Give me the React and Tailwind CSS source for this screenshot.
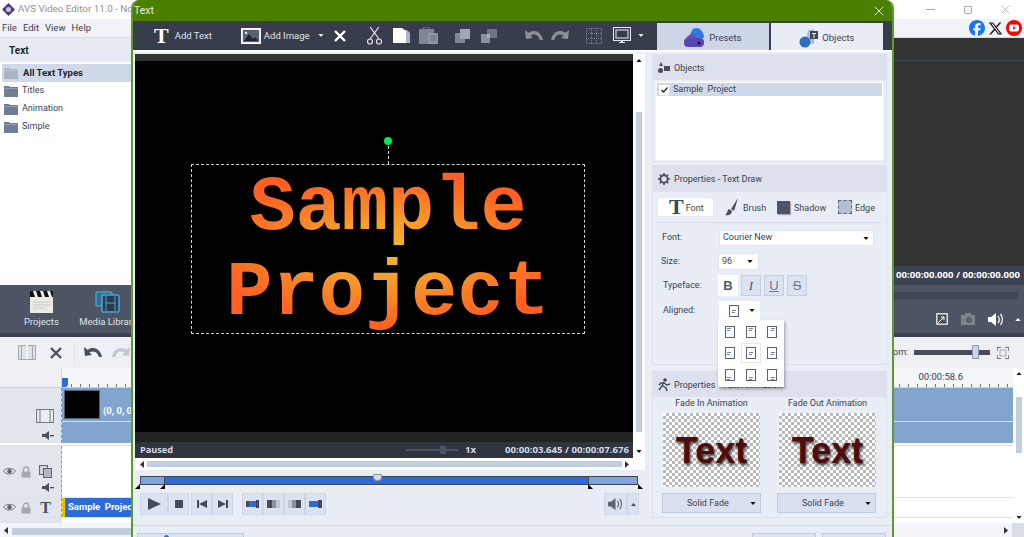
import React from 'react';
import { FaFacebook, FaXTwitter } from 'react-icons/fa6';

const Caret = ({ c = '#111', up, w = 7, h = 4, className = '' }) => (
  <svg width={w} height={h} viewBox="0 0 7 4" className={`shrink-0 ${className}`}><path d={up ? 'M0 4L3.5 0L7 4Z' : 'M0 0H7L3.5 4Z'} fill={c} /></svg>
);
const Side = ({ c = '#333', left }) => (
  <svg width="4" height="7" viewBox="0 0 4 7" className="shrink-0"><path d={left ? 'M4 0V7L0 3.5Z' : 'M0 0V7L4 3.5Z'} fill={c} /></svg>
);
const Folder = ({ c = '#717c96' }) => (
  <svg width="14" height="12" viewBox="0 0 14 12" className="shrink-0"><path d="M0 1h5l1 1h8v10H0z" fill={c} /><path d="M0 3h14v1H0z" fill="#fff" opacity=".25" /></svg>
);
const XMark = ({ s = 11, c = '#fff', w = 2.4 }) => (
  <svg width={s} height={s} viewBox="0 0 12 12" className="shrink-0"><path d="M1 1l10 10M11 1L1 11" stroke={c} strokeWidth={w} /></svg>
);
const Undo = ({ c = '#8b909b', flip, w = 18 }) => (
  <svg width={w} height={w * 0.67} viewBox="0 0 18 12" className={flip ? '-scale-x-100 shrink-0' : 'shrink-0'}><path d="M0 1l1 9 7-1-2.5-2.5C9 4.5 13 5 15 11h3C16 2 9 0 3.5 3.8z" fill={c} /></svg>
);
const Mute = ({ c = '#4a4f5b' }) => (
  <svg width="12" height="9" viewBox="0 0 12 9" className="shrink-0"><path d="M0 3h3l4-3v9L3 6H0z" fill={c} /><path d="M8 4h4v1.4H8z" fill={c} /></svg>
);
const Eye = () => (
  <svg width="13" height="9" viewBox="0 0 13 9" className="shrink-0"><path d="M.5 4C3 .5 10 .5 12.500 4 10 8 3 8 .5 4z" fill="#e6e8ee" stroke="#6e737f" /><circle cx="6.500" cy="4.200" r="2.300" fill="#5f646f" /></svg>
);
const Lock = () => (
  <svg width="10" height="12" viewBox="0 0 10 12" className="shrink-0"><path d="M2.500 6V3.500a2.500 2.500 0 015 0V6" fill="none" stroke="#a3a7b0" strokeWidth="1.400" /><rect x=".5" y="5.500" width="9" height="6" fill="#a3a7b0" /></svg>
);
const Speaker = ({ c = '#fff', s = 16 }) => (
  <svg width={s} height={s * 0.81} viewBox="0 0 16 13" className="shrink-0"><path d="M0 4h3l5-4v13L3 9H0z" fill={c} /><path d="M10 3c1.500 2 1.500 5 0 7M12.500 1c2.500 3 2.500 8 0 11" fill="none" stroke={c} strokeWidth="1.200" /></svg>
);
const Gear = () => (
  <svg width="12" height="12" viewBox="0 0 12 12" className="shrink-0"><circle cx="6" cy="6" r="3.700" fill="none" stroke="#4a4f5b" strokeWidth="2" /><path d="M6 0v2M6 10v2M0 6h2M10 6h2M1.800 1.800l1.400 1.400M8.800 8.800l1.400 1.400M10.200 1.800L8.800 3.200M3.200 8.800l-1.400 1.400" stroke="#4a4f5b" strokeWidth="1.600" /></svg>
);

const Align = ({ h, v }) => {
  const x = h === 0 ? 2 : h === 1 ? 3 : 4;
  const y = v === 0 ? 2 : v === 1 ? 5 : 8;
  return (
    <svg width="10" height="12" viewBox="0 0 10 12" className="shrink-0">
      <rect x=".5" y=".5" width="9" height="11" fill="#fff" stroke="#5b6373" />
      <path d={`M${x} ${y}h4v1h-4zM${x} ${y + 2}h3v1h-3z`} fill="#7b8494" />
    </svg>
  );
};

const TransportBtn = ({ children, w = 'w-[21px]' }) => (
  <div className={`${w} h-full flex items-center justify-center bg-[#dce3f0] border border-[#cfd7e6]`}>{children}</div>
);

const Checker = () => (
  <div className="w-[97px] h-[74px] flex items-center justify-center pt-px bg-[repeating-conic-gradient(#b9b9b9_0_25%,#ffffff_0_50%)] bg-[length:6px_6px]">
    <span className="font-['Liberation_Sans',sans-serif] font-bold text-[36px] leading-none text-[#4e0c0c] [text-shadow:1px_2px_3px_rgba(20,20,20,0.85)]">Text</span>
  </div>
);

const FadeBtn = () => (
  <div className="w-[99px] h-[20px] flex items-center bg-[#d9e0ef] border border-[#bfcbe0] pl-[24px] pr-[4px] justify-between">
    <span className="pt-px">Solid Fade</span><Caret w={6} h={3} />
  </div>
);

const GroupHead = ({ icon, children, h = 'h-[25px]' }) => (
  <div className={`${h} bg-[#dce1ed] flex items-center gap-[4px] pl-[5px] shrink-0`}>{icon}<span className="pt-[2px]">{children}</span></div>
);

function Background() {
  return (
    <div className="flex flex-col w-full h-full">
      <div className="h-[19px] bg-white flex items-center justify-between shrink-0">
        <div className="w-[131px] overflow-hidden whitespace-nowrap flex items-center pl-[2px] gap-[3px] text-[#8f9298] text-[9.800px]">
          <svg width="13" height="13" viewBox="0 0 13 13" className="shrink-0"><path d="M6.500 0L13 6.500 6.500 13 0 6.500z" fill="#4d3c76" /><circle cx="6.500" cy="6.500" r="2.500" fill="#c9c3dc" /></svg>
          <span>AVS Video Editor 11.0 - No</span>
        </div>
        <div className="flex items-center gap-[29px] pr-[14px]">
          <div className="w-[9px] h-px bg-[#aaa]" />
          <div className="w-[8px] h-[8px] border border-[#aaa] rounded-[1px]" />
          <XMark s={9} c="#aaa" w={1} />
        </div>
      </div>
      <div className="h-[19px] bg-[#f1f3f8] flex items-center justify-between shrink-0 border-b border-[#d8dce4]">
        <div className="flex gap-[6px] pl-[2px] text-[9.500px] text-[#3a3f4c]">
          <span>File</span><span>Edit</span><span>View</span><span>Help</span>
        </div>
        <div className="flex items-center gap-[3px] pr-[2px]">
          <FaFacebook size={16} color="#1877f2" />
          <FaXTwitter size={15} color="#222" />
          <svg width="16" height="16" viewBox="0 0 16 16"><circle cx="8" cy="8" r="8" fill="#f00" /><rect x="3" y="4.500" width="10" height="7" rx="2" fill="#fff" /><path d="M7 6.300v3.400L10 8z" fill="#f00" /></svg>
        </div>
      </div>
      <div className="h-[247px] flex justify-between shrink-0">
        <div className="w-[131px] bg-white flex flex-col">
          <div className="h-[25px] bg-[#e6eaf3] flex items-center pl-[9px] font-bold text-[10px] text-[#23262e] border-b border-white">Text</div>
          <div className="flex flex-col pt-[1px] text-[#3a3f4c]">
            <div className="h-[18px] ml-[2px] bg-[#d0d9ea] flex items-center gap-[5px] pl-[2px] font-bold text-[9.500px] text-[#23262e]"><Folder c="#aab4c9" />All Text Types</div>
            {['Titles', 'Animation', 'Simple'].map((t) => (
              <div key={t} className="h-[18px] ml-[4px] flex items-center gap-[4px]"><Folder />{t}</div>
            ))}
          </div>
        </div>
        <div className="w-[131px] bg-[#333333] flex flex-col justify-between">
          <div className="mt-[22px] h-px bg-[#3f464c]" />
          <div className="h-[19px] bg-[#3b4250] flex items-center justify-end pr-[4px] text-white font-bold text-[9.600px] font-['Noto_Sans',sans-serif] whitespace-nowrap">00:00:00.000 / 00:00:00.000</div>
        </div>
      </div>
      <div className="h-[52px] shrink-0 flex justify-between bg-[#4d5564] border-b-4 border-[#3a404c]">
        <div className="w-[131px] flex gap-[24px] pl-[24px] pt-[6px] text-[#dfe3ea] text-[9.500px] overflow-hidden">
          <div className="flex flex-col items-center gap-[2px]">
            <svg width="23" height="22" viewBox="0 0 23 22"><rect y="6" width="23" height="16" fill="#e9e9e6" /><rect width="23" height="6" fill="#111" /><path d="M3 0h3l2 6H5zM10 0h3l2 6h-3zM17 0h3l2 6h-3z" fill="#eee" /><path d="M3 11h17M3 14h17M3 17h12" stroke="#c9c9c9" /></svg>
            <span>Projects</span>
          </div>
          <div className="flex flex-col items-center gap-[2px] shrink-0 w-[50px]">
            <svg width="25" height="22" viewBox="0 0 25 22"><rect x="1" y="1" width="16" height="14" rx="1" fill="#2b6f96" stroke="#5fb4de" /><rect x="7" y="4" width="17" height="17" rx="1" fill="#2d3a48" stroke="#4aa5d6" strokeWidth="1.500" /><path d="M11 5v15M20 5v15M11 12h9" stroke="#4aa5d6" /></svg>
            <span className="whitespace-nowrap">Media Library</span>
          </div>
        </div>
        <div className="w-[131px] flex flex-col pt-[7px]">
          <div className="h-[7px] w-[125px] bg-[#3f4653]" />
          <div className="flex items-center mt-[14px] pl-[43px] gap-[13px]">
            <svg width="12" height="12" viewBox="0 0 12 12"><rect width="12" height="12" rx="1" fill="#dcdde0" /><rect x="1.500" y="1.500" width="9" height="9" fill="#4a4f5b" /><path d="M2 10l6-6M8 4H5M8 4v3" stroke="#fff" fill="none" /></svg>
            <svg width="14" height="12" viewBox="0 0 14 12"><rect y="2" width="14" height="10" fill="#7e838c" /><circle cx="8" cy="7" r="3" fill="#5a5f68" /><rect x="4" width="6" height="3" fill="#7e838c" /></svg>
            <Speaker />
            <Caret c="#fff" up w={6} h={3} className="ml-[-2px]" />
          </div>
        </div>
      </div>
      <div className="h-[31px] shrink-0 bg-[#eef0f6] flex items-center justify-between">
        <div className="flex items-center pl-[18px]">
          <svg width="18" height="15" viewBox="0 0 18 15"><rect x=".5" y=".5" width="17" height="14" fill="#dfe2e8" stroke="#a3a7b0" /><path d="M9 0v15" stroke="#fff" strokeWidth="2" strokeDasharray="2 1" /><path d="M3.500 0v15M14.500 0v15" stroke="#a3a7b0" /></svg>
          <div className="ml-[14px]"><XMark s={12} c="#4a4f5b" /></div>
          <div className="w-px h-[22px] bg-[#dfe2e8] ml-[12px]" />
          <div className="ml-[9px]"><Undo c="#4a4f5b" /></div>
          <div className="ml-[10px]"><Undo c="#c3c6cc" flip /></div>
        </div>
        <div className="flex items-center w-[131px] text-[#3a3f4c]">
          <span>om:</span>
          <div className="relative w-[76px] h-[5px] bg-[#474d5a] ml-[6px]">
            <div className="absolute left-[58px] top-[-5px] w-[7px] h-[14px] bg-[#cdd6e6] border border-[#8b95a8] rounded-[1px]" />
          </div>
          <svg width="12" height="12" viewBox="0 0 12 12" className="ml-[7px]"><path d="M0 4V0h4M8 0h4v4M12 8v4H8M4 12H0V8" fill="none" stroke="#4a4f5b" strokeWidth="1.300" /><rect x="3" y="3" width="6" height="6" fill="none" stroke="#a3a7b0" /></svg>
        </div>
      </div>
      <div className="h-[155px] shrink-0 flex">
        <div className="flex-1 flex flex-col">
          <div className="h-[20px] bg-[#f5f6fa] flex border-b border-[#c9ced9]">
            <div className="w-[62px] border-r border-[#d5d9e2] bg-[#eef0f6]" />
            <div className="flex-1 flex flex-col relative">
              <div className="absolute left-0 bottom-0 w-[6px] h-[9px] bg-[#2f6bd8] rounded-br-[3px]" />
              <div className="flex-1 flex justify-end items-center pr-[50px] text-[#3a3f4c] text-[9.500px] pt-[2px]">00:00:58.6</div>
              <div className="h-[3px] bg-[repeating-linear-gradient(90deg,#777_0_1px,transparent_1px_9px)]" />
            </div>
          </div>
          <div className="h-[55px] flex">
            <div className="w-[62px] bg-[#e1e5ee] border-r border-dashed border-[#8f949e] flex flex-col items-end pr-[7px] pt-[21px] gap-[8px]">
              <svg width="18" height="14" viewBox="0 0 18 14"><rect x=".5" y=".5" width="17" height="13" fill="#eceef3" stroke="#70757f" /><path d="M4 0v14M14 0v14" stroke="#70757f" /></svg>
              <Mute />
            </div>
            <div className="flex-1 bg-[#82a5cf] relative">
              <div className="h-[34px] border-b border-[#d7e2f0] flex items-end">
                <div className="w-[36px] h-[29px] bg-black ml-[2px] mb-[2px] border border-[#4f617a]" />
                <span className="ml-[3px] mb-[3px] font-bold text-white text-[9.500px]">(0, 0, 0)</span>
              </div>
            </div>
          </div>
          <div className="h-[52px] flex border-t border-[#dfe3ea] mt-[2px] bg-white">
            <div className="w-[62px] bg-[#e1e5ee] border-r border-dashed border-[#8f949e] flex flex-col items-end pr-[9px] pt-[19px]">
              <div className="flex items-center">
                <Eye /><div className="w-[5px]" /><Lock /><div className="w-[8px]" />
                <svg width="13" height="13" viewBox="0 0 13 13"><rect x=".5" y=".5" width="8" height="9" fill="#cfd2d9" stroke="#60656f" /><rect x="4.500" y="3.500" width="8" height="9" fill="#b3b7c0" stroke="#60656f" /></svg>
              </div>
              <div className="mt-[5px] mr-[-2px]"><Mute /></div>
            </div>
            <div className="flex-1" />
          </div>
          <div className="h-[21px] flex border-y border-[#dfe3ea]">
            <div className="w-[62px] bg-[#e1e5ee] border-r border-dashed border-[#8f949e] flex items-center justify-end pr-[10px]">
              <Eye /><div className="w-[5px]" /><Lock /><div className="w-[9px]" />
              <span className="font-['Liberation_Serif',serif] font-bold text-[16px] leading-none text-[#4a4f5b]">T</span>
            </div>
            <div className="flex-1 bg-white flex">
              <div className="w-[400px] h-[19px] bg-[#2f6bd8] border-l-[3px] border-[#f2c200] flex items-center pl-[3px] font-bold text-white text-[9.500px] whitespace-pre">Sample  Project</div>
            </div>
          </div>
          <div className="flex-1 bg-[#e1e5ee] w-[62px]" />
        </div>
        <div className="w-[11px] bg-white flex flex-col items-center justify-between py-[4px] relative">
          <Caret up c="#222" w={6} h={3} />
          <div className="absolute top-[29px] left-[3px] w-[6px] h-[56px] bg-[#c3cde0]" />
          <Caret c="#222" w={6} h={3} />
        </div>
      </div>
      <div className="flex-1 bg-[#f3f5fa] flex items-center pl-[4px]">
        <Side left c="#333" />
        <div className="absolute left-[12px] bottom-[2px] w-[119px] h-[7px] bg-[#c3cde0]" />
        <div className="ml-auto mr-[4px]"><Side c="#333" /></div>
        <div className="w-[12px] h-full bg-[#d9dde5]" />
      </div>
    </div>
  );
}

function Toolbar() {
  return (
    <div className="h-[29px] bg-[#373d4a] flex items-center shrink-0 text-[#dfe3ea] text-[9.500px] relative">
      <span className="ml-[21px] font-['Liberation_Serif',serif] font-bold text-[22px] leading-none text-white">T</span>
      <span className="ml-[6px] pt-[2px]">Add Text</span>
      <svg width="20" height="16" viewBox="0 0 20 16" className="ml-[29px]"><rect x=".5" y=".5" width="19" height="15" fill="#e2e5ea" stroke="#fff" /><rect x="2" y="2" width="16" height="12" fill="#596070" /><path d="M3 13l5-7 4 5 2-2 3 4z" fill="#1f2430" /><circle cx="5" cy="5" r="1.300" fill="#e2e5ea" /></svg>
      <span className="ml-[3px] w-[54px] pt-[2px]">Add Image</span>
      <Caret c="#dfe3ea" w={6} h={3} />
      <div className="ml-[10px]"><XMark s={12} /></div>
      <svg width="15" height="18" viewBox="0 0 15 18" className="ml-[21px]"><path d="M3 0l9 12M12 0L3 12" stroke="#e6e8ee" strokeWidth="1.200" /><circle cx="3" cy="14.500" r="2.500" fill="none" stroke="#e6e8ee" strokeWidth="1.200" /><circle cx="12" cy="14.500" r="2.500" fill="none" stroke="#e6e8ee" strokeWidth="1.200" /></svg>
      <svg width="17" height="16" viewBox="0 0 17 16" className="ml-[11px]"><path d="M4 2h10l3 3v10H4z" fill="#a9b3cf" /><path d="M0 0h9l4 3v12H0z" fill="#fff" /></svg>
      <svg width="19" height="17" viewBox="0 0 19 17" className="ml-[9px]"><rect y="2" width="15" height="15" rx="1" fill="#7f8694" /><rect x="4" width="6" height="4" rx="1" fill="none" stroke="#7f8694" /><rect x="9" y="6" width="10" height="11" fill="#8e95a3" /><path d="M11 9h6M11 11h6M11 13h6" stroke="#6c7280" /></svg>
      <svg width="15" height="14" viewBox="0 0 15 14" className="ml-[17px]"><rect y="4" width="10" height="10" fill="#7f8694" /><rect x="5" width="10" height="10" fill="#a1a7b3" /></svg>
      <svg width="16" height="14" viewBox="0 0 16 14" className="ml-[11px]"><rect y="5" width="9" height="9" fill="#8a909c" /><rect x="6" width="10" height="9" fill="#6f7582" /><rect x="6" y="5" width="3" height="4" fill="#a9afba" /></svg>
      <div className="ml-[28px]"><Undo c="#8b909b" /></div>
      <div className="ml-[8px]"><Undo c="#8b909b" flip /></div>
      <svg width="16" height="16" viewBox="0 0 16 16" className="ml-[17px]"><path d="M.5.500h15v15H.5zM5.500 0v16M10.500 0v16M0 5.500h16M0 10.500h16" fill="none" stroke="#7f8694" strokeDasharray="1 1" /></svg>
      <svg width="18" height="18" viewBox="0 0 18 18" className="ml-[11px]"><rect x=".5" y=".5" width="17" height="13" fill="none" stroke="#e6e8ee" /><rect x="3" y="3" width="12" height="8" fill="none" stroke="#b6bcc8" strokeWidth="1.400" /><path d="M6 15h6v1H6zM8 14h2v1H8z" fill="#e6e8ee" /></svg>
      <Caret c="#e6e8ee" w={6} h={3} className="ml-[7px]" />
      <div className="flex self-end h-[27px] ml-[13px] gap-[2px] text-[#3a3f4c]">
        <div className="w-[112px] bg-[#cdd6e6] flex items-center justify-center gap-[3px] pt-[3px]">
          <svg width="22" height="20" viewBox="0 0 22 20"><path d="M12 0c5 0 8 5 8 10H6C6 5 8 0 12 0z" fill="#2f7be0" /><path d="M4 8c3-3 8-2 9 2H2z" fill="#6a4bc0" /><rect y="10" width="20" height="9" rx="4" fill="#5b44b0" /><circle cx="15" cy="15" r="1.500" fill="#111" /></svg>
          <span>Presets</span>
        </div>
        <div className="w-[112px] bg-[#e9edf6] flex items-center justify-center gap-[3px] pt-[3px]">
          <svg width="20" height="19" viewBox="0 0 20 19"><path d="M9 1l6-1v15H6z" fill="#a9c0e6" /><circle cx="6" cy="13" r="5.500" fill="#2f6fc0" /><rect x="11" y="2" width="8" height="8" fill="#3f4653" /><path d="M13 4h4v1h-1.500v4h-1V5H13z" fill="#fff" /></svg>
          <span>Objects</span>
        </div>
      </div>
    </div>
  );
}

function PreviewCol() {
  return (
    <div className="w-[510px] flex flex-col shrink-0">
      <div className="h-[404px] flex">
        <div className="w-[498px] flex flex-col">
          <div className="h-[7px] bg-[#333333]" />
          <div className="h-[371px] bg-black relative">
            <div className="absolute left-[56px] top-[103px] w-[394px] h-[170px] border border-dashed border-[#d5d5d5] pt-px">
              <div className="font-['Liberation_Mono',monospace] font-bold text-[77px] leading-[85px] text-center whitespace-pre bg-clip-text text-transparent bg-[radial-gradient(ellipse_at_center,#f6b82c_0%,#f79c2a_25%,#fb7426_50%,#ff5f20_65%)]">{'Sample\nProject'}</div>
            </div>
            <div className="absolute left-[249px] top-[76px] w-[8px] h-[8px] rounded-full bg-[#00e85a]" />
            <div className="absolute left-[253px] top-[85px] h-[18px] border-l border-dashed border-[#d5d5d5]" />
          </div>
          <div className="h-[10px] bg-[#222222]" />
          <div className="h-[16px] bg-[#2f3440] flex items-center pl-[5px] pr-[4px] font-bold text-[#d3dbe8] text-[9.600px] font-['Noto_Sans',sans-serif]">
            <span className="text-[9.200px]">Paused</span>
            <div className="relative w-[52px] h-[2px] bg-[#4b5261] ml-auto">
              <div className="absolute left-[34px] top-[-3px] w-[6px] h-[8px] bg-[#4b5261]" />
            </div>
            <span className="ml-[7px]">1x</span>
            <span className="ml-[29px]">00:00:03.645 / 00:00:07.676</span>
          </div>
        </div>
        <div className="w-[12px] bg-white flex flex-col items-center justify-between py-[5px] relative">
          <Caret up w={6} h={3} />
          <div className="absolute top-[58px] left-[3px] w-[6px] h-[320px] bg-[#c3cde0]" />
          <Caret w={6} h={3} />
        </div>
      </div>
      <div className="h-[12px] bg-white flex items-center pl-[5px] pr-[16px] gap-[3px]">
        <Side left />
        <div className="flex-1 h-[6px] bg-[#c3cde0]" />
        <Side />
      </div>
      <div className="h-[9px] mt-[6px] ml-[5px] mr-[7px] flex border border-[#3f4653] bg-[#2f6bd8] justify-between relative shrink-0">
        <div className="w-[24px] bg-[#7fa3dc] border-r border-[#3f4653]" />
        <div className="w-[49px] bg-[#7fa3dc] border-l border-[#3f4653]" />
        <div className="absolute left-[232px] top-[-3px] w-[9px] h-[7px] bg-[#d9dde6] border border-[#8b95a8] rounded-b-[4px]" />
        <div className="absolute left-[-6px] bottom-[-5px] border-b-[5px] border-l-[5px] border-b-black border-l-transparent" />
        <div className="absolute left-[19px] bottom-[-5px] border-b-[5px] border-l-[5px] border-b-black border-l-transparent" />
        <div className="absolute right-[44px] bottom-[-5px] border-b-[5px] border-r-[5px] border-b-black border-r-transparent" />
        <div className="absolute right-[-6px] bottom-[-5px] border-b-[5px] border-r-[5px] border-b-black border-r-transparent" />
      </div>
      <div className="h-[22px] mt-[8px] ml-[5px] mr-[6px] flex shrink-0">
        <TransportBtn w="w-[28px]"><svg width="13" height="12" viewBox="0 0 13 12"><path d="M0 0l13 6-13 6z" fill="#454b58" /></svg></TransportBtn>
        <TransportBtn><div className="w-[8px] h-[8px] bg-[#454b58]" /></TransportBtn>
        <div className="w-[2px]" />
        <TransportBtn><svg width="10" height="8" viewBox="0 0 10 8"><path d="M0 0h2v8H0zM10 0v8L2 4z" fill="#454b58" /></svg></TransportBtn>
        <TransportBtn><svg width="10" height="8" viewBox="0 0 10 8"><path d="M10 0H8v8h2zM0 0v8l8-4z" fill="#454b58" /></svg></TransportBtn>
        <div className="w-[9px]" />
        <TransportBtn><svg width="13" height="8" viewBox="0 0 13 8"><rect x="3" y="1" width="7" height="6" fill="#2f6bd8" /><path d="M0 1h3v6H0zM10 0h3v8h-3z" fill="#454b58" /></svg></TransportBtn>
        <TransportBtn><svg width="13" height="8" viewBox="0 0 13 8"><rect width="5" height="8" fill="#454b58" /><rect x="5" width="4" height="8" fill="#8b909b" /><rect x="9" width="4" height="8" fill="#c3c6cc" /></svg></TransportBtn>
        <TransportBtn><svg width="13" height="8" viewBox="0 0 13 8"><rect width="4" height="8" fill="#c3c6cc" /><rect x="4" width="4" height="8" fill="#8b909b" /><rect x="8" width="5" height="8" fill="#454b58" /></svg></TransportBtn>
        <TransportBtn><svg width="13" height="8" viewBox="0 0 13 8"><rect x="0" y="1" width="9" height="6" fill="#2f6bd8" /><path d="M9 0h4v8H9z" fill="#454b58" /></svg></TransportBtn>
        <div className="ml-auto flex h-full">
          <TransportBtn w="w-[23px]"><Speaker c="#60656f" s={15} /></TransportBtn>
          <TransportBtn w="w-[12px]"><Caret up c="#454b58" w={5} h={3} /></TransportBtn>
        </div>
      </div>
    </div>
  );
}

function RightCol() {
  return (
    <div className="w-[235px] ml-[7px] flex flex-col shrink-0 relative">
      <div className="h-[108px] border border-[#dce1ed] flex flex-col">
        <GroupHead icon={<svg width="12" height="11" viewBox="0 0 12 11"><path d="M3 0l2 4H1z" fill="#4a4f5b" /><circle cx="2.500" cy="8.500" r="2.500" fill="#4a4f5b" /><rect x="6" y="4" width="6" height="5" fill="#4a4f5b" /></svg>}>Objects</GroupHead>
        <div className="mx-[2px] mt-[1px] flex-1 bg-white p-[1px] border border-[#eef1f7]">
          <div className="h-[13px] bg-[#d0d9ea] flex items-center gap-[4px] pl-[2px] whitespace-pre">
            <div className="w-[10px] h-[10px] bg-white flex items-center justify-center">
              <svg width="7" height="6" viewBox="0 0 7 6"><path d="M.5 3l2 2L6.500.5" fill="none" stroke="#222" strokeWidth="1.300" /></svg>
            </div>
            <span className="pt-px">Sample  Project</span>
          </div>
        </div>
      </div>
      <div className="h-[200px] mt-[3px] border border-[#dce1ed] flex flex-col">
        <GroupHead h="h-[26px]" icon={<Gear />}>Properties - Text Draw</GroupHead>
        <div className="flex items-center h-[20px] mt-[5px] ml-[4px]">
          <div className="w-[57px] h-full bg-white flex items-center pl-[11px] gap-[2px] border border-[#e3e8f2]">
            <span className="font-['Liberation_Serif',serif] font-bold text-[22px] leading-none text-[#3f4653]">T</span><span className="pt-[3px]">Font</span>
          </div>
          <svg width="14" height="18" viewBox="0 0 14 18" className="ml-[11px] shrink-0"><path d="M13 0L6 11l3 2z" fill="#4a4f5b" /><path d="M4 11c-2 1-1 4-4 6 4 1 7-1 7-4z" fill="#4a4f5b" /></svg>
          <span className="ml-[4px] w-[34px] pt-[3px]">Brush</span>
          <div className="w-[13px] h-[13px] bg-[#4d5564] shadow-[1px_1px_1px_#aab] shrink-0" />
          <span className="ml-[4px] w-[44px] pt-[3px]">Shadow</span>
          <div className="w-[14px] h-[14px] bg-[#b6bfd2] border border-dashed border-[#5b6373] shrink-0" />
          <span className="ml-[3px] pt-[3px]">Edge</span>
        </div>
        <div className="h-px bg-[#d5dbe8] mx-[4px] mt-[5px]" />
        <div className="flex items-center mt-[7px] h-[16px]">
          <span className="w-[66px] pl-[9px]">Font:</span>
          <div className="w-[155px] h-full bg-white border border-[#dfe4ef] flex items-center justify-between pl-[3px] pr-[4px]"><span>Courier New</span><Caret w={6} h={3} /></div>
        </div>
        <div className="flex items-center mt-[7px] h-[17px]">
          <span className="w-[65px] pl-[8px] pt-px">Size:</span>
          <div className="w-[41px] h-full bg-white border border-[#dfe4ef] flex items-center justify-between pl-[3px] pr-[5px]"><span>96</span><Caret w={6} h={3} /></div>
        </div>
        <div className="flex items-center mt-[5px] h-[21px]">
          <span className="w-[65px] pl-[10px] pt-px">Typeface:</span>
          <div className="flex gap-[3px] text-[#4f5664] text-[13px] leading-none">
            <div className="w-[20px] h-[21px] bg-white flex items-center justify-center font-bold font-['Liberation_Sans',sans-serif]">B</div>
            <div className="w-[20px] h-[21px] bg-[#dce3f0] border border-[#c3cee0] flex items-center justify-center italic font-['Liberation_Serif',serif]">I</div>
            <div className="w-[20px] h-[21px] bg-[#dce3f0] border border-[#c3cee0] flex items-center justify-center underline text-[#717887] font-['Liberation_Sans',sans-serif]">U</div>
            <div className="w-[20px] h-[21px] bg-[#dce3f0] border border-[#c3cee0] flex items-center justify-center line-through text-[#717887] font-['Liberation_Sans',sans-serif]">S</div>
          </div>
        </div>
        <div className="flex items-start mt-[5px] h-[19px]">
          <span className="w-[66px] pl-[10px] pt-[3px]">Aligned:</span>
          <div className="w-[41px] h-full bg-white flex items-center pl-[10px] pr-[5px] justify-between"><Align h={1} v={1} /><Caret w={6} h={3} /></div>
        </div>
      </div>
      <div className="h-[147px] mt-[6px] border border-[#dce1ed] flex flex-col">
        <GroupHead icon={<svg width="12" height="13" viewBox="0 0 12 13"><circle cx="7" cy="2" r="1.800" fill="#3f4653" /><path d="M6 4L4 8 1 12M6 5l3 2 3-1M5 8l3 2 1 3M6 5L3 5 1 7" fill="none" stroke="#3f4653" strokeWidth="1.400" /></svg>}>Properties - Text Animation</GroupHead>
        <div className="flex justify-between pl-[10px] pr-[10px]">
          <div className="flex flex-col items-center">
            <span className="h-[12px] flex items-center pt-px">Fade In Animation</span>
            <div className="mt-[4px]"><Checker /></div>
          </div>
          <div className="flex flex-col items-center">
            <span className="h-[12px] flex items-center pt-px">Fade Out Animation</span>
            <div className="mt-[4px]"><Checker /></div>
          </div>
        </div>
        <div className="flex justify-between pl-[9px] pr-[10px] mt-[6px]"><FadeBtn /><FadeBtn /></div>
      </div>
      <div className="absolute left-[66px] top-[266px] w-[66px] h-[67px] bg-white shadow-[1px_2px_3px_rgba(0,0,0,0.35)] grid grid-cols-3 place-items-center px-[2px] py-[1px] z-10">
        {[0, 1, 2].map((v) => [0, 1, 2].map((h) => (
          <div key={`${h}${v}`} className={`w-[20px] h-[20px] flex items-center justify-center ${h === 1 && v === 1 ? 'border border-[#e3e8f2]' : ''}`}><Align h={h} v={v} /></div>
        )))}
      </div>
    </div>
  );
}

function Dialog() {
  return (
    <div className="absolute left-[131px] top-0 w-[763px] h-[560px] bg-[#e9edf6] border-x-2 border-[#5f9a2a] rounded-t-[8px] flex flex-col overflow-hidden text-[#3a3f4c]">
      <div className="h-[21px] bg-[#4a7f00] flex items-center justify-between pl-[1px] pr-[8px] shrink-0 text-[#e6efd8] text-[10.500px]">
        <span>Text</span>
        <XMark s={10} w={1} />
      </div>
      <Toolbar />
      <div className="border-t-2 border-white pt-[2px] pl-[2px] flex h-[475px] shrink-0">
        <PreviewCol />
        <RightCol />
      </div>
      <div className="border-t border-[#d5dbe8] flex-1 pt-[7px] flex">
        <div className="ml-[4px] w-[107px] h-[20px] bg-[#dce3f0] border border-[#bfcbe0] pl-[26px] pt-[1px]">
          <div className="w-[5px] h-[5px] rounded-full bg-[#2f6fc0]" />
        </div>
        <div className="ml-auto w-[64px] h-[20px] bg-[#dce3f0] border border-[#bfcbe0]" />
        <div className="ml-[6px] mr-[6px] w-[64px] h-[20px] bg-[#dce3f0] border border-[#bfcbe0]" />
      </div>
    </div>
  );
}

export default function App() {
  return (
    <div className="relative w-[1024px] h-[537px] overflow-hidden bg-white font-['Roboto',sans-serif] text-[9px] text-[#3a3f4c]">
      <Background />
      <Dialog />
    </div>
  );
}
